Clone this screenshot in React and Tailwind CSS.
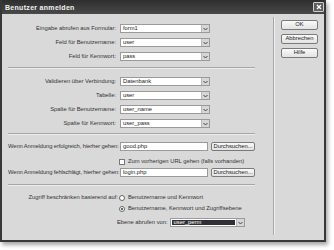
import React from "react";

const font = { fontFamily: "'Liberation Sans', Arial, sans-serif" };

const Arrow = () => (
  <div className="flex h-full w-[8px] items-center justify-center border-l border-[#b8b8b8] bg-[#d6d6d6]">
    <svg width="5" height="4" viewBox="0 0 5 4">
      <path d="M0.5 1 L2.5 3 L4.5 1" fill="none" stroke="#444" strokeWidth="1" />
    </svg>
  </div>
);

const Select = ({ value, width = "w-[90px]", active = false }) => (
  <div className={`flex h-[9px] ${width} items-stretch border border-[#9a9a9a] bg-white`}>
    <div className={`flex flex-1 items-center px-[2px] ${active ? "m-[1px] bg-[#2f2f35] text-white" : "text-[#222]"}`}>
      {value}
    </div>
    <Arrow />
  </div>
);

const Btn = ({ children, className = "" }) => (
  <div className={`flex items-center justify-center rounded-[2px] border border-[#7a7a7a] bg-gradient-to-b from-[#fafafa] to-[#e2e2e2] text-[#222] ${className}`}>
    {children}
  </div>
);

const Sep = ({ className = "" }) => (
  <div className={`h-[2px] w-[247px] border-t border-[#a6a6a6] border-b border-b-[#ececec] ${className}`} />
);

const Row = ({ label, children, className = "" }) => (
  <div className={`flex h-[9px] items-center ${className}`}>
    <div className="w-[109px] pr-[1px] text-right text-[#333]">{label}</div>
    <div className="ml-[3px] flex items-center">{children}</div>
  </div>
);

export default function App() {
  return (
    <div className="h-[250px] w-[334px] bg-white" style={font}>
      <div className="flex h-[242px] w-[326px] flex-col border-2 border-t-0 border-[#383838] bg-[#d9d9d9] text-[5.8px] leading-none shadow-[2px_3px_4px_rgba(0,0,0,0.35)]">
        <div className="flex h-[14px] items-center justify-between bg-gradient-to-b from-[#2e2e2e] to-[#4a4a4a] pl-[3px] pr-[0px]">
          <span className="text-[7px] font-bold tracking-[0.3px] text-[#f2f2f2]">Benutzer anmelden</span>
          <div className="flex h-[10px] w-[11px] items-center justify-center rounded-[1px] border border-[#cfcfcf] bg-[#5e5e5e]">
            <svg width="6" height="6" viewBox="0 0 6 6">
              <path d="M1 1 L5 5 M5 1 L1 5" stroke="#fff" strokeWidth="1.3" />
            </svg>
          </div>
        </div>
        <div className="flex flex-1">
          <div className="w-[271px] pl-[6px] pt-[10px]">
            <div className="flex flex-col gap-[5px]">
              <Row label="Eingabe abrufen aus Formular:"><Select value="form1" /></Row>
              <Row label="Feld für Benutzername:"><Select value="user" /></Row>
              <Row label="Feld für Kennwort:"><Select value="pass" /></Row>
            </div>
            <Sep className="mt-[6px]" />
            <div className="mt-[8px] flex flex-col gap-[5px]">
              <Row label="Validieren über Verbindung:"><Select value="Datenbank" /></Row>
              <Row label="Tabelle:"><Select value="user" /></Row>
              <Row label="Spalte für Benutzername:"><Select value="user_name" /></Row>
              <Row label="Spalte für Kennwort:"><Select value="user_pass" /></Row>
            </div>
            <Sep className="mt-[5px]" />
            <div className="mt-[7px] flex h-[9px] items-center">
              <div className="w-[112px] whitespace-nowrap tracking-[-0.1px] text-[#333]">Wenn Anmeldung erfolgreich, hierher gehen:</div>
              <div className="flex h-[9px] w-[88px] items-center border border-[#9a9a9a] bg-white px-[2px] text-[#222]">good.php</div>
              <Btn className="ml-[3px] h-[9px] w-[44px]">Durchsuchen...</Btn>
            </div>
            <div className="mt-[6px] flex h-[9px] items-center pl-[111px]">
              <div className="h-[6px] w-[6px] border border-[#777] bg-white" />
              <span className="ml-[3px] text-[#333]">Zum vorherigen URL gehen (falls vorhanden)</span>
            </div>
            <div className="mt-[2px] flex h-[9px] items-center">
              <div className="w-[112px] whitespace-nowrap tracking-[-0.1px] text-[#333]">Wenn Anmeldung fehlschlägt, hierher gehen:</div>
              <div className="flex h-[9px] w-[88px] items-center border border-[#9a9a9a] bg-white px-[2px] text-[#222]">login.php</div>
              <Btn className="ml-[3px] h-[9px] w-[44px]">Durchsuchen...</Btn>
            </div>
            <Sep className="mt-[7px]" />
            <div className="mt-[7px] flex h-[9px] items-center">
              <div className="w-[110px] whitespace-nowrap text-right text-[#333]">Zugriff beschränken basierend auf:</div>
              <div className="ml-[1px] h-[6px] w-[6px] rounded-full border border-[#666] bg-white" />
              <span className="ml-[3px] text-[#333]">Benutzername und Kennwort</span>
            </div>
            <div className="mt-[2px] flex h-[9px] items-center pl-[111px]">
              <div className="flex h-[6px] w-[6px] items-center justify-center rounded-full border border-[#666] bg-white">
                <div className="h-[2px] w-[2px] rounded-full bg-[#333]" />
              </div>
              <span className="ml-[3px] text-[#333]">Benutzername, Kennwort und Zugriffsebene</span>
            </div>
            <div className="mt-[5px] flex h-[9px] items-center pl-[109px]">
              <span className="mr-[2px] whitespace-nowrap text-[#333]">Ebene abrufen von:</span>
              <Select value="user_perm" width="w-[75px]" active />
            </div>
          </div>
          <div className="mb-[5px] mt-[3px] w-[2px] border-l border-[#a8a8a8] border-r border-r-[#efefef]" />
          <div className="flex flex-col gap-[4px] pl-[6px] pt-[6px]">
            <Btn className="h-[10px] w-[37px]">OK</Btn>
            <Btn className="h-[10px] w-[37px]">Abbrechen</Btn>
            <Btn className="h-[10px] w-[37px]">Hilfe</Btn>
          </div>
        </div>
      </div>
    </div>
  );
}
